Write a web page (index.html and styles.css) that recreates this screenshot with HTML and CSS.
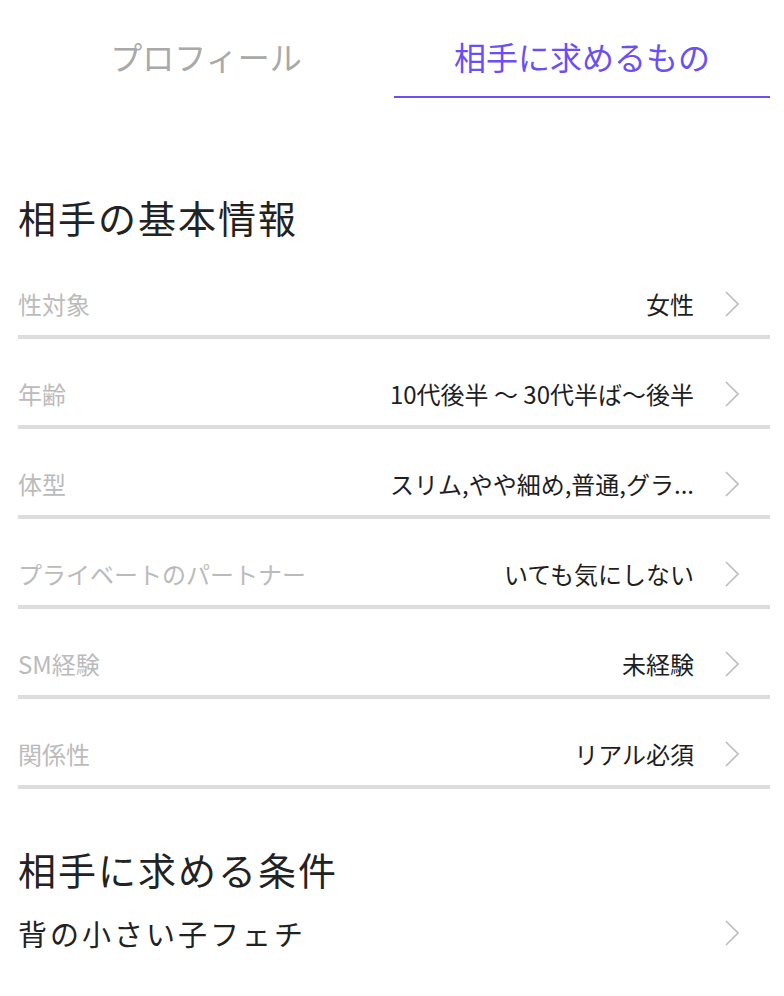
FILE: index.html
```html
<!DOCTYPE html>
<html lang="ja">
<head>
<meta charset="utf-8">
<title>相手に求めるもの</title>
<link rel="stylesheet" href="styles.css">
</head>
<body>
<div class="page">
  <nav class="tabs">
    <div class="tab">プロフィール</div>
    <div class="tab active">相手に求めるもの</div>
  </nav>

  <h2 class="heading first">相手の基本情報</h2>
  <ul class="rows">
    <li class="row"><span class="label">性対象</span><span class="value">女性</span><svg class="chev" viewBox="0 0 14 26" width="14" height="26"><polyline points="1,1 13,13 1,25"/></svg></li>
    <li class="row"><span class="label">年齢</span><span class="value">10代後半 〜 30代半ば〜後半</span><svg class="chev" viewBox="0 0 14 26" width="14" height="26"><polyline points="1,1 13,13 1,25"/></svg></li>
    <li class="row"><span class="label">体型</span><span class="value">スリム,やや細め,普通,グラ...</span><svg class="chev" viewBox="0 0 14 26" width="14" height="26"><polyline points="1,1 13,13 1,25"/></svg></li>
    <li class="row"><span class="label">プライベートのパートナー</span><span class="value">いても気にしない</span><svg class="chev" viewBox="0 0 14 26" width="14" height="26"><polyline points="1,1 13,13 1,25"/></svg></li>
    <li class="row"><span class="label">SM経験</span><span class="value">未経験</span><svg class="chev" viewBox="0 0 14 26" width="14" height="26"><polyline points="1,1 13,13 1,25"/></svg></li>
    <li class="row"><span class="label">関係性</span><span class="value">リアル必須</span><svg class="chev" viewBox="0 0 14 26" width="14" height="26"><polyline points="1,1 13,13 1,25"/></svg></li>
  </ul>

  <h2 class="heading second">相手に求める条件</h2>
  <div class="item"><span class="item-text">背の小さい子フェチ</span><svg class="chev" viewBox="0 0 14 26" width="14" height="26"><polyline points="1,1 13,13 1,25"/></svg></div>
</div>
</body>
</html>
```

FILE: styles.css
```css
html, body {
  margin: 0;
  padding: 0;
  background: #ffffff;
}

body {
  font-family: "Noto Sans CJK JP", "Noto Sans", sans-serif;
  color: #222222;
}

.page {
  padding: 0 14px 0 18px;
}

.tabs {
  display: flex;
}

.tab {
  flex: 1;
  text-align: center;
  font-size: 32px;
  line-height: 40px;
  padding: 36px 0 20px;
  color: #a9a9a9;
  border-bottom: 2px solid transparent;
}

.tab.active {
  color: #6a4ff6;
  border-bottom-color: #6a4ff6;
}

.heading {
  margin: 0;
  font-size: 38px;
  line-height: 48px;
  font-weight: 400;
  letter-spacing: 2px;
  color: #222222;
}

.heading.first {
  margin-top: 95px;
  margin-bottom: 8px;
}

.heading.second {
  margin-top: 56px;
  margin-bottom: 20px;
}

.rows {
  list-style: none;
  margin: 0;
  padding: 0;
}

.row {
  display: flex;
  align-items: center;
  padding: 39px 31px 15px 0;
  border-bottom: 4px solid #dddddd;
}

.label {
  flex: 1;
  font-size: 24px;
  line-height: 32px;
  color: #bbbbbb;
  white-space: nowrap;
}

.value {
  font-size: 24px;
  line-height: 32px;
  color: #1e1e1e;
  white-space: nowrap;
}

.chev {
  flex: none;
  margin-left: 31px;
  fill: none;
  stroke: #bdbdbd;
  stroke-width: 1.6;
}

.item {
  display: flex;
  align-items: center;
  padding-right: 31px;
}

.item-text {
  flex: 1;
  font-size: 29px;
  line-height: 40px;
  letter-spacing: 3px;
  color: #222222;
}
```
